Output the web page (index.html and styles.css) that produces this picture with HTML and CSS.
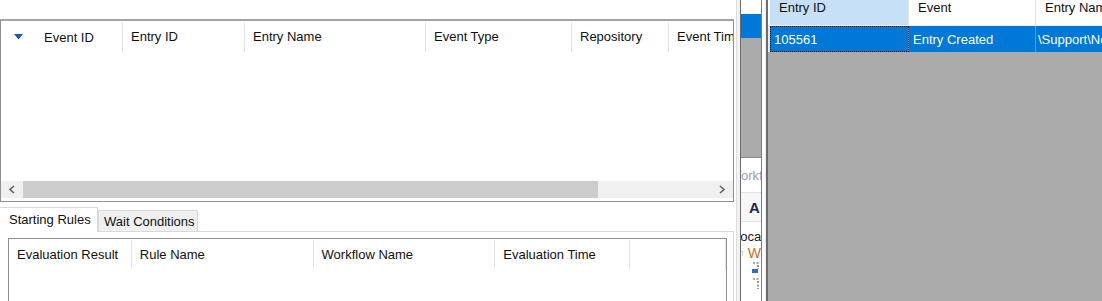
FILE: index.html
```html
<!DOCTYPE html>
<html lang="en">
<head>
    <meta charset="UTF-8">
    <title>Workflow Events</title>
    <link rel="stylesheet" href="styles.css">
</head>
<body>

<div class="window">
    <!-- Left side: event list and rules -->
    <div class="left-pane">
        <div class="event-list">
            <div class="list-header">
                <div class="col col-event-id">
                    <svg class="sort-arrow" width="9" height="6" viewBox="0 0 9 6"><polygon points="0,0 9,0 4.5,5.5" fill="#1c5ca6"/></svg>
                    <span>Event ID</span>
                </div>
                <div class="col col-entry-id">Entry ID</div>
                <div class="col col-entry-name">Entry Name</div>
                <div class="col col-event-type">Event Type</div>
                <div class="col col-repo">Repository</div>
                <div class="col col-time">Event Time</div>
            </div>
            <div class="list-body"></div>
            <div class="hscroll">
                <div class="scroll-btn">
                    <svg width="8" height="9" viewBox="0 0 8 9"><polyline points="6,1 2,4.5 6,8" fill="none" stroke="#606060" stroke-width="1.6"/></svg>
                </div>
                <div class="scroll-track">
                    <div class="scroll-thumb"></div>
                </div>
                <div class="scroll-btn">
                    <svg width="8" height="9" viewBox="0 0 8 9"><polyline points="2,1 6,4.5 2,8" fill="none" stroke="#606060" stroke-width="1.6"/></svg>
                </div>
            </div>
        </div>

        <div class="tabs">
            <div class="tab-strip">
                <div class="tab active">Starting Rules</div>
                <div class="tab">Wait Conditions</div>
            </div>
            <div class="tab-page">
                <div class="rules-list">
                    <div class="list-header rules-header">
                        <div class="col col-result">Evaluation Result</div>
                        <div class="col col-rule">Rule Name</div>
                        <div class="col col-workflow">Workflow Name</div>
                        <div class="col col-eval-time">Evaluation Time</div>
                        <div class="col col-rest"></div>
                    </div>
                </div>
            </div>
        </div>
    </div>

    <!-- Splitter with the narrow docked panel -->
    <div class="splitter">
        <div class="split-edge"></div>
        <div class="dock">
            <div class="dock-top">
                <div class="dock-white"></div>
                <div class="dock-blue"></div>
                <div class="dock-gray"></div>
            </div>
            <div class="dock-bottom">
                <div class="dock-title">Workflow</div>
                <div class="dock-toolbar"><span>A</span></div>
                <div class="dock-label">Local</div>
                <div class="dock-tree">
                    <div class="tree-row">
                        <svg width="8" height="12" viewBox="0 0 8 12"><path d="M1 1h4v10H1" fill="none" stroke="#2b6cc4" stroke-width="1.4" stroke-dasharray="2 1.5"/></svg>
                        <span class="tree-text">W</span>
                    </div>
                    <div class="tree-row sub">
                        <svg width="9" height="12" viewBox="0 0 9 12"><path d="M2 1h5v6" fill="none" stroke="#555" stroke-width="1.2" stroke-dasharray="2 1.5"/><rect x="1" y="7" width="6" height="4" fill="#2b6cc4"/></svg>
                    </div>
                    <div class="tree-row sub">
                        <svg width="9" height="12" viewBox="0 0 9 12"><path d="M2 1h5v10" fill="none" stroke="#555" stroke-width="1.2" stroke-dasharray="2 1.5"/></svg>
                    </div>
                </div>
            </div>
        </div>
        <div class="split-right"></div>
    </div>

    <!-- Right side: entry grid -->
    <div class="right-pane">
        <div class="grid-header">
            <div class="gcol gcol-id selected">Entry ID</div>
            <div class="gcol gcol-event">Event</div>
            <div class="gcol gcol-name">Entry Name</div>
        </div>
        <div class="grid-row">
            <div class="gcell gcol-id focused">105561</div>
            <div class="gcell gcol-event">Entry Created</div>
            <div class="gcell gcol-name">\Support\New</div>
        </div>
    </div>
</div>

</body>
</html>
```

FILE: styles.css
```css
body {
    margin: 0;
    padding: 0;
    background-color: #fff;
    font-family: "Liberation Sans", Arial, sans-serif;
    font-size: 13px;
    color: #111;
}
.window {
    display: flex;
    width: 1102px;
    height: 301px;
    overflow: hidden;
}

/* left pane */
.left-pane {
    width: 734px;
    flex-shrink: 0;
    padding-top: 19px;
    box-sizing: border-box;
}
.event-list {
    height: 183px;
    box-sizing: border-box;
    border: 1px solid #8f9094;
    border-top: 2px solid #a3a4a8;
    display: flex;
    flex-direction: column;
}
.list-header {
    display: flex;
    padding-top: 1px;
    flex-shrink: 0;
}
.col {
    height: 30px;
    line-height: 29px;
    box-sizing: border-box;
    padding-left: 8px;
    border-right: 1px solid #e5e5e5;
    white-space: nowrap;
    overflow: hidden;
}
.col-event-id {
    width: 122px;
    padding-left: 13px;
    display: flex;
    align-items: center;
}
.sort-arrow {
    margin-right: 21px;
}
.col-entry-id { width: 122px; }
.col-entry-name { width: 181px; }
.col-event-type { width: 146px; }
.col-repo { width: 97px; }
.col-time { flex: 1; border-right: none; }
.list-body {
    flex: 1;
}
.hscroll {
    height: 17px;
    margin-bottom: 3px;
    display: flex;
    background-color: #f0f0f0;
}
.scroll-btn {
    width: 22px;
    display: flex;
    align-items: center;
    justify-content: center;
}
.scroll-track {
    flex: 1;
}
.scroll-thumb {
    width: 575px;
    height: 100%;
    background-color: #cdcdcd;
}

/* tabs */
.tabs {
    margin-top: 5px;
}
.tab-strip {
    display: flex;
    align-items: flex-end;
    height: 24px;
}
.tab {
    height: 21px;
    line-height: 21px;
    padding: 0 5px;
    width: 100px;
    box-sizing: border-box;
    background-color: #f0f0f0;
    border: 1px solid #d9d9d9;
    border-bottom: none;
    white-space: nowrap;
}
.tab.active {
    width: 98px;
    height: 25px;
    line-height: 23px;
    padding-left: 9px;
    background-color: #fff;
    margin-bottom: -1px;
    position: relative;
    border-left: none;
}
.tab-page {
    height: 70px;
    border-top: 1px solid #d9d9d9;
    border-right: 1px solid #d9d9d9;
    padding: 6px 6px 0 8px;
}
.rules-list {
    height: 100%;
    border: 1px solid #8f9094;
    border-bottom: none;
}
.rules-header .col {
    height: 29px;
    line-height: 29px;
}
.col-result { width: 123px; }
.col-rule { width: 182px; }
.col-workflow { width: 182px; }
.col-eval-time { width: 135px; }
.col-rest { width: 96px; }

/* splitter and docked panel */
.splitter {
    width: 34px;
    flex-shrink: 0;
    display: flex;
    padding-left: 2px;
    box-sizing: border-box;
}
.split-edge {
    width: 4px;
    background-color: #f2f2f2;
    border-left: 1px solid #dedede;
    box-sizing: border-box;
}
.dock {
    width: 22px;
    box-sizing: border-box;
    border-left: 1px solid #6c6c6c;
    border-right: 1px solid #3b8de0;
    display: flex;
    flex-direction: column;
    overflow: hidden;
}
.dock-top {
    height: 157px;
    display: flex;
    flex-direction: column;
    border-bottom: 1px solid #8a8a8a;
}
.dock-white {
    height: 14px;
    background-color: #fff;
}
.dock-blue {
    height: 24px;
    background-color: #0078d7;
}
.dock-gray {
    flex: 1;
    background-color: #ababab;
}
.dock-bottom {
    flex: 1;
    background-color: #fff;
    white-space: nowrap;
}
.dock-title {
    margin-top: 10px;
    margin-left: -12px;
    color: #9c9cb0;
    line-height: 16px;
}
.dock-toolbar {
    margin-top: 8px;
    height: 28px;
    border-top: 1px solid #e3e3e3;
    border-bottom: 1px solid #e3e3e3;
    background-color: #f7f7f7;
    display: flex;
    align-items: center;
    padding-left: 8px;
    font-weight: bold;
    font-size: 15px;
    color: #1c2350;
}
.dock-label {
    margin-top: 7px;
    margin-left: -8px;
    line-height: 16px;
    color: #1a1a1a;
}
.dock-tree {
    margin-top: 1px;
}
.tree-row {
    display: flex;
    align-items: center;
    height: 14px;
    gap: 4px;
}
.tree-row.sub {
    padding-left: 10px;
    height: 16px;
}
.tree-text {
    color: #c8701c;
    font-size: 14px;
}
.split-right {
    width: 6px;
    background-color: #f0f0f0;
    border-left: 3px solid #fff;
    border-right: 2px solid #6c6c6c;
    box-sizing: border-box;
}

/* right grid */
.right-pane {
    flex: 1;
    background-color: #ababab;
}
.grid-header {
    display: flex;
    height: 25px;
    background-color: #fff;
    border-bottom: 1px solid #f0f0f0;
    padding-left: 2px;
}
.gcol {
    line-height: 16px;
    padding-left: 9px;
    box-sizing: border-box;
    border-right: 1px solid #e5e5e5;
    white-space: nowrap;
    overflow: hidden;
}
.gcol.selected {
    background-color: #c6e0f7;
}
.gcol-id { width: 139px; }
.gcol-event { width: 127px; }
.gcol-name { flex: 1; border-right: none; }
.grid-row {
    display: flex;
    height: 26px;
    background-color: #0078d7;
    color: #fff;
    border-left: 2px solid #e8e8e8;
}
.gcell {
    line-height: 28px;
    padding-left: 4px;
    box-sizing: border-box;
    border-right: 1px solid #4a9ae4;
    white-space: nowrap;
    overflow: hidden;
}
.gcell.gcol-name {
    padding-left: 2px;
    border-right: none;
}
.gcell.focused {
    outline: 1px dotted #1a1a1a;
    outline-offset: -1px;
}
```
